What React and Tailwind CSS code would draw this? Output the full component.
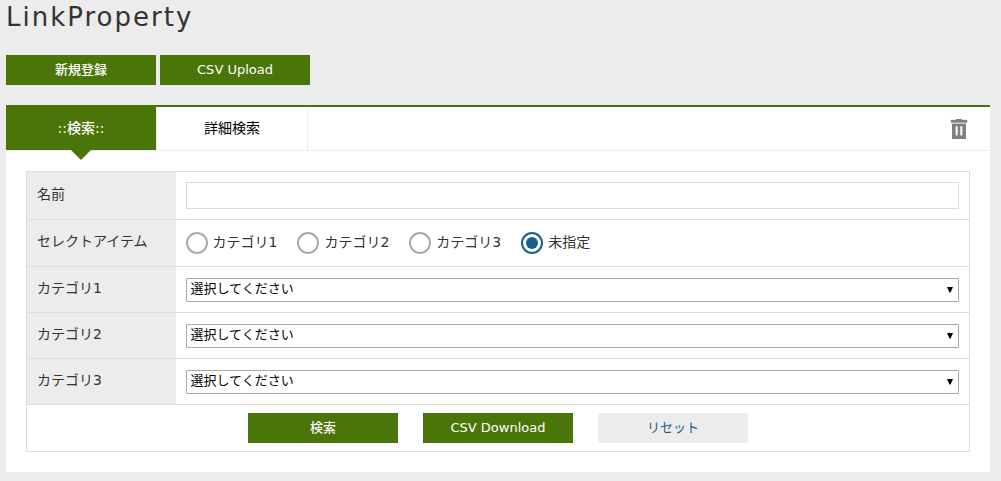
import React from "react";

const categories = ["カテゴリ1", "カテゴリ2", "カテゴリ3"];
const choices = [...categories, "未指定"];

function Button({ children, muted, type = "button" }) {
  const tone = muted ? "bg-[#ececec] text-[#15608a]" : "bg-[#4a7508] font-medium text-white";
  return (
    <button type={type} className={`h-[30px] w-[150px] cursor-pointer text-[13px] leading-5 ${tone}`}>
      {children}
    </button>
  );
}

function TrashIcon() {
  return (
    <svg width="18" height="20" viewBox="0 0 18 20" aria-hidden="true">
      <rect x="0.5" y="0.5" width="17" height="4" rx="1" fill="#d3d8d3" />
      <path d="M6 0h6v1h5v2.500H1V1h5z" fill="#808080" />
      <path d="M2 4.700h14V20H2z" fill="#808080" />
      <path d="M6.700 8v7.500M11.300 8v7.500" stroke="#c8ccc8" strokeWidth="2.600" strokeLinecap="round" />
      <path d="M6.700 8v7.500M11.300 8v7.500" stroke="#fff" strokeWidth="1.200" strokeLinecap="round" />
    </svg>
  );
}

function Row({ label, htmlFor, id, height, children }) {
  return (
    <tr className={`border-b border-[#dcdcdc] ${height}`}>
      <th scope="row" className="w-[149px] bg-[#ececec] px-2.5 pb-1 text-left align-middle font-normal whitespace-nowrap">
        {htmlFor ? <label htmlFor={htmlFor}>{label}</label> : <span id={id}>{label}</span>}
      </th>
      <td className="px-2.5 align-middle">{children}</td>
    </tr>
  );
}

function CategorySelect({ id }) {
  return (
    <div className="relative">
      <select
        id={id}
        className="block h-6 w-full appearance-none rounded-[1px] border border-[#a9a9a9] bg-white px-1 pb-0.5 text-[13px] leading-5 text-black"
      >
        <option>選択してください</option>
      </select>
      <svg
        className="pointer-events-none absolute top-2 right-1.5"
        width="6"
        height="7"
        viewBox="0 0 6 7"
        aria-hidden="true"
      >
        <path d="M0 1h6L3.500 6.500h-1z" fill="#000" />
      </svg>
    </div>
  );
}

export default function App() {
  return (
    <main className="min-h-screen bg-[#ececec] pr-[11px] pb-2 pl-1.5 font-['DejaVu_Sans','Noto_Sans_CJK_JP',sans-serif] text-sm text-[#333]">
      <h1 className="pb-5 text-[26px] leading-[35px] tracking-[2px]">LinkProperty</h1>
      <div className="flex gap-1">
        <Button>新規登録</Button>
        <Button>CSV Upload</Button>
      </div>

      <section className="mt-5 border-t-2 border-[#4a7508] bg-white">
        <div className="flex items-center justify-between border-b border-[#ececec] pr-[22px]">
          <div role="tablist" className="flex">
            <button role="tab" aria-selected="true" className="relative h-[43px] w-[150px] bg-[#4a7508] pb-0.5 font-medium text-white">
              ::検索::
              <svg className="absolute top-full left-[65px]" width="20" height="10" viewBox="0 0 20 10" aria-hidden="true">
                <path d="M0 0h20L10 10z" fill="#4a7508" />
              </svg>
            </button>
            <button role="tab" aria-selected="false" className="h-[43px] w-[152px] border-x border-[#ececec] pb-0.5 text-black">
              詳細検索
            </button>
          </div>
          <button aria-label="削除" className="cursor-pointer">
            <TrashIcon />
          </button>
        </div>

        <form className="p-5" onSubmit={(e) => e.preventDefault()}>
          <table className="w-full border-collapse border border-[#dcdcdc]">
            <tbody>
              <Row label="名前" htmlFor="name" height="h-12">
                <input id="name" type="text" className="block h-[27px] w-full border border-[#dcdcdc] bg-white px-1 text-black" />
              </Row>
              <Row label="セレクトアイテム" id="item-label" height="h-[47px]">
                <div role="radiogroup" aria-labelledby="item-label" className="flex gap-5">
                  {choices.map((name) => (
                    <label key={name} className="flex items-center gap-[5px]">
                      <input
                        type="radio"
                        name="item"
                        defaultChecked={name === "未指定"}
                        className="grid size-[22px] appearance-none place-content-center rounded-full border-2 border-[#a9a9a9] bg-white before:size-3 before:rounded-full checked:border-[#15608a] checked:before:bg-[#15608a]"
                      />
                      <span className="pb-0.5">{name}</span>
                    </label>
                  ))}
                </div>
              </Row>
              {categories.map((name, i) => (
                <Row key={name} label={name} htmlFor={`category-${i}`} height="h-[46px]">
                  <CategorySelect id={`category-${i}`} />
                </Row>
              ))}
              <tr className="h-[47px]">
                <td colSpan={2} className="align-middle">
                  <div className="flex justify-center gap-[25px]">
                    <Button type="submit">検索</Button>
                    <Button>CSV Download</Button>
                    <Button type="reset" muted>リセット</Button>
                  </div>
                </td>
              </tr>
            </tbody>
          </table>
        </form>
      </section>
    </main>
  );
}
